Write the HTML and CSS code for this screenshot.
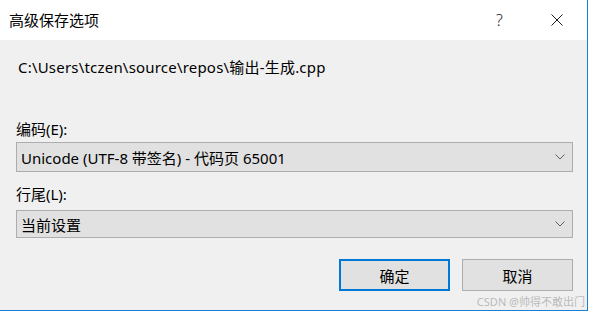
FILE: index.html
```html
<!DOCTYPE html>
<html lang="zh-CN">

<head>
    <meta charset="UTF-8">
    <meta name="viewport" content="width=device-width, initial-scale=1.0">
    <title>高级保存选项</title>
    <link rel="stylesheet" href="styles.css">
</head>

<body>
<div class="window">
    <div class="titlebar">
        <span class="title">高级保存选项</span>
        <span class="help">?</span>
        <span class="close">
            <svg width="12" height="12" viewBox="0 0 12 12">
                <path d="M0.5 0.5 L11.5 11.5 M11.5 0.5 L0.5 11.5" stroke="#1a1a1a" stroke-width="1" fill="none"/>
            </svg>
        </span>
    </div>

    <div class="content">
        <div class="path">C:\Users\tczen\source\repos\输出-生成.cpp</div>

        <div class="field-label">编码(E):</div>
        <div class="combo">
            <span>Unicode (UTF-8 带签名) - 代码页 65001</span>
            <svg class="chevron" width="10" height="6" viewBox="0 0 10 6">
                <path d="M0.5 0.5 L5 5 L9.5 0.5" stroke="#606060" stroke-width="1" fill="none"/>
            </svg>
        </div>

        <div class="field-label second">行尾(L):</div>
        <div class="combo combo-second">
            <span>当前设置</span>
            <svg class="chevron" width="10" height="6" viewBox="0 0 10 6">
                <path d="M0.5 0.5 L5 5 L9.5 0.5" stroke="#606060" stroke-width="1" fill="none"/>
            </svg>
        </div>

        <div class="buttons">
            <button class="btn btn-default">确定</button>
            <button class="btn">取消</button>
        </div>
    </div>

    <div class="watermark">CSDN @帅得不敢出门</div>
</div>
</body>

</html>
```

FILE: styles.css
```css
html, body {
    margin: 0;
    background: #ffffff;
}

body {
    font-family: "Noto Sans", "Noto Sans CJK SC", sans-serif;
    font-size: 15px;
    color: #000;
}

.window {
    position: relative;
    width: 587px;
    height: 310px;
    background: #f0f0f0;
    border-right: 1px solid #1a7fd4;
    border-bottom: 1px solid #1a7fd4;
}

.titlebar {
    display: flex;
    align-items: center;
    height: 40px;
    background: #ffffff;
    padding-left: 9px;
}

.title {
    flex: 1;
    font-size: 15px;
    line-height: 20px;
}

.help {
    width: 20px;
    margin-right: 35px;
    font-size: 16px;
    font-weight: 300;
    color: #1a1a1a;
}

.close {
    display: flex;
    width: 12px;
    margin-right: 24px;
}

.content {
    padding-left: 16px;
    padding-right: 14px;
}

.path {
    margin-top: 17px;
    padding-left: 2px;
    line-height: 20px;
    letter-spacing: 0.2px;
}

.field-label {
    margin-top: 42px;
    line-height: 20px;
}

.field-label.second {
    margin-top: 12px;
}

.combo {
    display: flex;
    align-items: center;
    justify-content: space-between;
    box-sizing: border-box;
    height: 30px;
    margin-top: 3px;
    padding: 0 7px 0 4px;
    background: #e1e1e1;
    border: 1px solid #adadad;
}

.combo-second {
    margin-top: 6px;
    height: 28px;
}

.buttons {
    display: flex;
    justify-content: flex-end;
    gap: 12px;
    margin-top: 21px;
}

.btn {
    box-sizing: border-box;
    width: 111px;
    height: 32px;
    font-family: inherit;
    font-size: 15px;
    color: #000;
    background: #e1e1e1;
    border: 1px solid #adadad;
    padding: 0;
}

.btn-default {
    border: 2px solid #0078d7;
}

.watermark {
    position: absolute;
    right: 2px;
    bottom: 1px;
    font-size: 11px;
    color: rgba(160, 160, 160, 0.7);
}
```
